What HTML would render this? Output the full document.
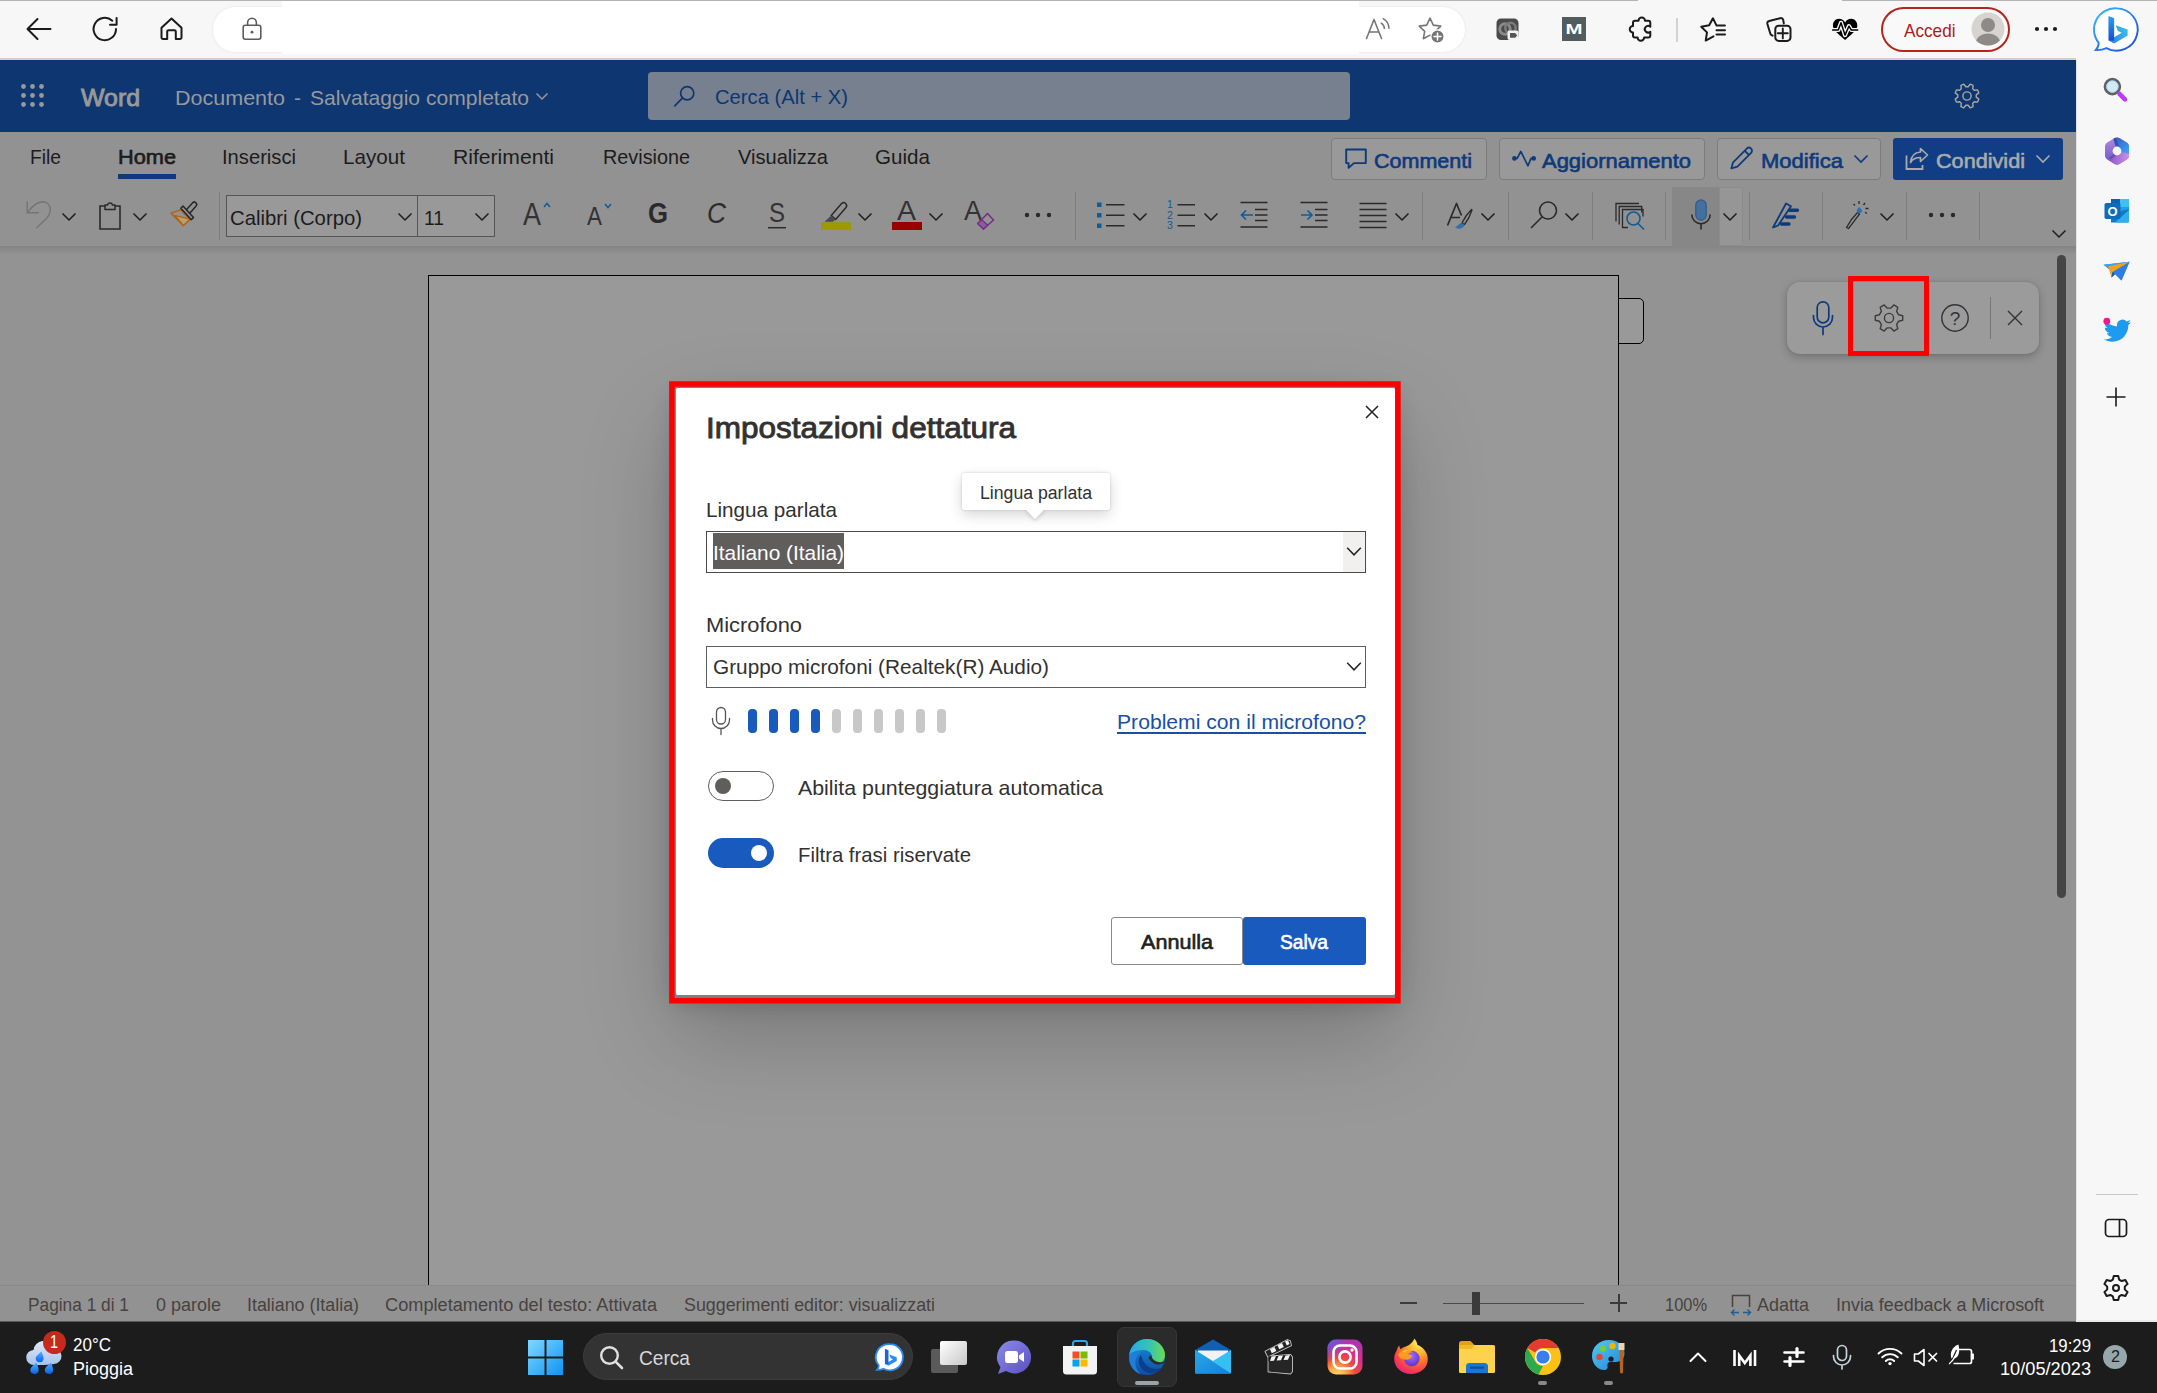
<!DOCTYPE html>
<html lang="it">
<head>
<meta charset="utf-8">
<title>Impostazioni dettatura - Word</title>
<style>
html,body{margin:0;padding:0}
body{width:2157px;height:1393px;overflow:hidden;position:relative;background:#939393;font-family:"Liberation Sans",sans-serif;color:#1c1c1c}
.a{position:absolute}
.t{position:absolute;white-space:nowrap;line-height:1;transform-origin:0 50%}
svg{position:absolute;overflow:visible}
.s{fill:none;stroke:#1b1b1b;stroke-width:1.5;stroke-linecap:round;stroke-linejoin:round}
.vd{position:absolute;width:1px;background:#7d7d7d;top:192px;height:48px}
</style>
</head>
<body>
<!-- ===== browser toolbar ===== -->
<div class="a" style="left:0;top:0;width:2157px;height:58px;background:#f7f7f7"></div>
<div class="a" style="left:0;top:0;width:1638px;height:1px;background:#b4b4b4"></div>
<div class="a" style="left:1842px;top:0;width:315px;height:1px;background:#b4b4b4"></div>
<div class="a" style="left:0;top:58px;width:2076px;height:2px;background:#cfcfcf"></div>
<div class="a" style="left:213px;top:7px;width:1252px;height:45px;border-radius:23px;background:#fff;box-shadow:0 0 3px rgba(0,0,0,.08)"></div>
<div class="a" style="left:282px;top:1px;width:1077px;height:53px;background:#fff"></div>
<!-- back -->
<svg style="left:25px;top:15px" width="28" height="28" viewBox="0 0 28 28"><path class="s" style="stroke-width:2" d="M25.5 14H3M12.5 4L2.5 14l10 10"/></svg>
<!-- refresh -->
<svg style="left:91px;top:15px" width="28" height="28" viewBox="0 0 28 28"><path class="s" style="stroke-width:2" d="M25 13.5A11.2 11.2 0 1 1 21.3 5.2M25.6 2.6v6.6h-6.6" transform="translate(0,.5)"/></svg>
<!-- home -->
<svg style="left:158px;top:15px" width="28" height="28" viewBox="0 0 28 28"><path class="s" style="stroke-width:2" d="M3.5 12.8L13.5 3.6l10 9.2V22.6a1.5 1.5 0 0 1-1.5 1.5h-4.2V16.6a1.4 1.4 0 0 0-1.4-1.4h-5.8a1.4 1.4 0 0 0-1.4 1.4v7.5H5a1.5 1.5 0 0 1-1.5-1.5z"/></svg>
<!-- lock -->
<svg style="left:241px;top:16px" width="22" height="26" viewBox="0 0 22 26"><rect x="2.2" y="9.2" width="17.6" height="14" rx="2.2" fill="none" stroke="#5c5c5c" stroke-width="1.6"/><path d="M6.6 9V6.6a4.4 4.4 0 0 1 8.8 0V9" fill="none" stroke="#5c5c5c" stroke-width="1.6"/><circle cx="11" cy="16.2" r="1.4" fill="#5c5c5c"/></svg>
<!-- read aloud -->
<svg style="left:1365px;top:16px" width="28" height="26" viewBox="0 0 28 26"><path d="M1.5 22.5L9 3.5l7.5 19M4.2 16h9.6" fill="none" stroke="#767676" stroke-width="1.6" stroke-linecap="round" stroke-linejoin="round"/><path d="M16.2 7.2a6.5 6.5 0 0 1 3.2 5.2M18.2 2.6a11.5 11.5 0 0 1 5.8 9.6" fill="none" stroke="#767676" stroke-width="1.5" stroke-linecap="round"/></svg>
<!-- add favourite -->
<svg style="left:1417px;top:15px" width="30" height="30" viewBox="0 0 30 30"><path d="M13 3.2l3.3 6.9 7.5 1-5.5 5.2 1.4 7.4-6.7-3.6-6.7 3.6 1.4-7.4L2.2 11.1l7.5-1z" fill="none" stroke="#767676" stroke-width="1.6" stroke-linejoin="round"/><circle cx="20.5" cy="21.5" r="6.6" fill="#767676" stroke="#fff" stroke-width="1.2"/><path d="M20.5 18v7M17 21.5h7" stroke="#fff" stroke-width="1.5" stroke-linecap="round"/></svg>
<!-- ext 1 -->
<svg style="left:1496px;top:18px" width="24" height="24" viewBox="0 0 24 24"><rect x="0.5" y="0.5" width="22" height="21.5" rx="4.5" fill="#4a4a4a"/><circle cx="9" cy="11" r="5.2" fill="none" stroke="#8a8a8a" stroke-width="3"/><circle cx="14.5" cy="10" r="5.2" fill="none" stroke="#7a7a7a" stroke-width="2.6"/><rect x="11.5" y="12.5" width="11" height="9.5" rx="2" fill="#f2f2f2"/><path d="M14 15h5.2l2 2.4-2 2.4H14z" fill="#555"/></svg>
<!-- ext M -->
<div class="a" style="left:1562px;top:17px;width:24px;height:24px;background:#525b5d"></div>
<svg style="left:1562px;top:17px" width="24" height="24" viewBox="0 0 24 24"><text x="12" y="17.4" text-anchor="middle" font-family="Liberation Sans, sans-serif" font-size="14.5" font-weight="bold" fill="#fff" textLength="17" lengthAdjust="spacingAndGlyphs">M</text></svg>
<!-- puzzle -->
<svg style="left:1627px;top:16px" width="28" height="28" viewBox="0 0 28 28"><path class="s" style="stroke-width:2" d="M8 4.8H11.5a3.25 3.25 0 0 1 6.5 0H21.3a2 2 0 0 1 2 2V10.7a3.3 3.3 0 1 0 0 5V19.5a2 2 0 0 1-2 2H17.1a3.25 3.25 0 0 1-6.5 0H8a2 2 0 0 1-2-2V16.4a3.25 3.25 0 0 1 0-6.5V6.8a2 2 0 0 1 2-2z"/></svg>
<div class="a" style="left:1676px;top:18px;width:2px;height:24px;background:#d2d2d2"></div>
<!-- favourites -->
<svg style="left:1698px;top:16px" width="30" height="28" viewBox="0 0 30 28"><path class="s" style="stroke-width:2" d="M26.9 9.6H18.6L14.9 2.3 11.2 9.3 3.2 10.7 9 16.4 7.7 24.6 15.5 20.4"/><path class="s" style="stroke-width:2" d="M18.5 14.3h8.5M18.5 18.6h8.5"/></svg>
<!-- collections -->
<svg style="left:1765px;top:16px" width="30" height="30" viewBox="0 0 30 30"><path class="s" style="stroke-width:2" d="M7.6 19.6l-.8-.3a2.6 2.6 0 0 1-1.6-2.1L2.4 8a2.5 2.5 0 0 1 1.8-3l11-2.8a2.5 2.5 0 0 1 3 1.7l.6 3.5"/><rect class="s" style="stroke-width:2" x="10.3" y="9.7" width="15.2" height="15.2" rx="3.4"/><path class="s" style="stroke-width:1.9" d="M17.8 12.4v10M12.8 17.3h10"/></svg>
<!-- heart pulse -->
<svg style="left:1832px;top:17px" width="27" height="25" viewBox="0 0 27 25"><path d="M13.1 5.4C11.8 3 9.6 1.7 7 1.7 3.6 1.7.9 4.6.9 8.3c0 4.2 3.1 7.2 12.2 14.7 9.1-7.5 12.2-10.5 12.2-14.7 0-3.7-2.7-6.6-6.1-6.6-2.6 0-4.8 1.3-6.1 3.7z" fill="#000"/><path d="M-.5 13H6.3L9 5.8l4 12.3 3.9-8.9 2.4 3.8h8" fill="none" stroke="#f7f7f7" stroke-width="4.2" stroke-linejoin="round"/><path d="M.6 13H6.3L9 5.8l4 12.3 3.9-8.9 2.4 3.8h6.4" fill="none" stroke="#000" stroke-width="1.5" stroke-linejoin="round" stroke-linecap="round"/></svg>
<!-- Accedi -->
<div class="a" style="left:1881px;top:7px;width:125px;height:41px;border:2px solid #b3261e;border-radius:23px;background:#f9f9f9"></div>
<span class="t" style="left:1904px;top:21px;font-size:19px;color:#b01a1a;transform:scaleX(0.9030)">Accedi</span>
<svg style="left:1971px;top:12px" width="34" height="34" viewBox="0 0 34 34"><defs><clipPath id="av"><circle cx="17" cy="17" r="16.5"/></clipPath></defs><circle cx="17" cy="17" r="16.5" fill="#d6d4d1"/><g clip-path="url(#av)" fill="#8d8a87"><circle cx="17" cy="13" r="7"/><ellipse cx="17" cy="32" rx="12.5" ry="10.5"/></g></svg>
<!-- ... -->
<svg style="left:2034px;top:26px" width="24" height="6" viewBox="0 0 24 6"><circle cx="3" cy="3" r="2.1" fill="#1b1b1b"/><circle cx="12" cy="3" r="2.1" fill="#1b1b1b"/><circle cx="21" cy="3" r="2.1" fill="#1b1b1b"/></svg>
<!-- ===== Word header ===== -->
<div class="a" style="left:0;top:60px;width:2076px;height:72px;background:#0e3671"></div>
<svg style="left:20px;top:83px" width="26" height="26" viewBox="0 0 26 26" fill="#999"><circle cx="3.5" cy="3.5" r="2.4"/><circle cx="12.5" cy="3.5" r="2.4"/><circle cx="21.5" cy="3.5" r="2.4"/><circle cx="3.5" cy="12.5" r="2.4"/><circle cx="12.5" cy="12.5" r="2.4"/><circle cx="21.5" cy="12.5" r="2.4"/><circle cx="3.5" cy="21.5" r="2.4"/><circle cx="12.5" cy="21.5" r="2.4"/><circle cx="21.5" cy="21.5" r="2.4"/></svg>
<span class="t" style="left:81px;top:86px;font-size:24px;color:#999;-webkit-text-stroke:.9px #999;transform:scaleX(1.0368)">Word</span>
<span class="t" style="left:175px;top:87px;font-size:21px;color:#999;transform:scaleX(1.0243)">Documento</span>
<span class="t" style="left:294px;top:87px;font-size:21px;color:#999;transform:scaleX(1.0000)">-</span>
<span class="t" style="left:310px;top:87px;font-size:21px;color:#999;transform:scaleX(1.0031)">Salvataggio completato</span>
<svg style="left:535px;top:92px" width="14" height="9" viewBox="0 0 14 9"><path d="M1.5 1.5L7 7l5.5-5.5" fill="none" stroke="#999" stroke-width="1.5"/></svg>
<div class="a" style="left:648px;top:72px;width:702px;height:48px;border-radius:4px;background:#77808e"></div>
<svg style="left:673px;top:84px" width="24" height="24" viewBox="0 0 24 24"><circle cx="14.2" cy="9.2" r="6.6" fill="none" stroke="#0e3671" stroke-width="1.7"/><path d="M9.6 13.8L1.8 21.8" stroke="#0e3671" stroke-width="1.7" stroke-linecap="round"/></svg>
<span class="t" style="left:715px;top:86px;font-size:21px;color:#0e3671;transform:scaleX(0.9617)">Cerca (Alt + X)</span>
<svg style="left:1953px;top:82px" width="28" height="28" viewBox="0 0 28 28"><path d="M23.23 15.13 L25.78 17.16 L24.57 20.10 L21.33 19.73 L19.73 21.33 L20.10 24.57 L17.16 25.78 L15.13 23.23 L12.87 23.23 L10.84 25.78 L7.90 24.57 L8.27 21.33 L6.67 19.73 L3.43 20.10 L2.22 17.16 L4.77 15.13 L4.77 12.87 L2.22 10.84 L3.43 7.90 L6.67 8.27 L8.27 6.67 L7.90 3.43 L10.84 2.22 L12.87 4.77 L15.13 4.77 L17.16 2.22 L20.10 3.43 L19.73 6.67 L21.33 8.27 L24.57 7.90 L25.78 10.84 L23.23 12.87z" fill="none" stroke="#aaa6a0" stroke-width="1.4" stroke-linejoin="round"/><circle cx="14" cy="14" r="4.1" fill="none" stroke="#aaa6a0" stroke-width="1.4"/></svg>
<!-- ===== tabs + ribbon ===== -->
<div class="a" style="left:0;top:132px;width:2076px;height:114px;background:#929292"></div>
<div class="a" style="left:0;top:246px;width:2076px;height:9px;background:linear-gradient(#858585,#939393)"></div>
<span class="t" style="left:30px;top:146px;font-size:21px;transform:scaleX(0.9160)">File</span>
<span class="t" style="left:118px;top:146px;font-size:21px;-webkit-text-stroke:.65px #1c1c1c;transform:scaleX(1.0351)">Home</span>
<div class="a" style="left:118px;top:174px;width:58px;height:5px;background:#0e3a7c"></div>
<span class="t" style="left:222px;top:146px;font-size:21px;transform:scaleX(0.9606)">Inserisci</span>
<span class="t" style="left:343px;top:146px;font-size:21px;transform:scaleX(0.9832)">Layout</span>
<span class="t" style="left:453px;top:146px;font-size:21px;transform:scaleX(1.0064)">Riferimenti</span>
<span class="t" style="left:603px;top:146px;font-size:21px;transform:scaleX(0.9434)">Revisione</span>
<span class="t" style="left:738px;top:146px;font-size:21px;transform:scaleX(0.9557)">Visualizza</span>
<span class="t" style="left:875px;top:146px;font-size:21px;transform:scaleX(0.9813)">Guida</span>
<!-- right buttons -->
<div class="a" style="left:1331px;top:138px;width:156px;height:42px;border:1px solid #7c7c7c;border-radius:4px;background:#999;box-sizing:border-box"></div>
<svg style="left:1344px;top:147px" width="24" height="24" viewBox="0 0 24 24"><path d="M2.2 2.5h19.6v13.6H10l-5.4 4.8v-4.8H2.2z" fill="none" stroke="#0e3a7c" stroke-width="1.9" stroke-linejoin="round"/></svg>
<span class="t" style="left:1374px;top:150px;font-size:21px;color:#0e3a7c;-webkit-text-stroke:.65px #0e3a7c;transform:scaleX(1.0240)">Commenti</span>
<div class="a" style="left:1499px;top:138px;width:206px;height:42px;border:1px solid #7c7c7c;border-radius:4px;background:#999;box-sizing:border-box"></div>
<svg style="left:1510px;top:148px" width="28" height="20" viewBox="0 0 28 20"><path d="M4.4 10.4h2.8L10.8 3.4 18 17.8l3-7.400h2.7" fill="none" stroke="#0e3a7c" stroke-width="1.7" stroke-linejoin="round" stroke-linecap="round"/><circle cx="4.4" cy="10.4" r="2.3" fill="#0e3a7c"/><circle cx="23.7" cy="10.4" r="2.3" fill="#0e3a7c"/></svg>
<span class="t" style="left:1542px;top:150px;font-size:21px;color:#0e3a7c;-webkit-text-stroke:.65px #0e3a7c;transform:scaleX(1.0461)">Aggiornamento</span>
<div class="a" style="left:1717px;top:138px;width:164px;height:42px;border:1px solid #7c7c7c;border-radius:4px;background:#999;box-sizing:border-box"></div>
<svg style="left:1729px;top:146px" width="26" height="26" viewBox="0 0 26 26"><path d="M17.8 2.6a3 3 0 0 1 4.3 4.3L8.4 20.6l-6 1.7 1.7-6zM15.8 4.8l4.2 4.2" fill="none" stroke="#0e3a7c" stroke-width="1.8" stroke-linejoin="round"/></svg>
<span class="t" style="left:1761px;top:150px;font-size:21px;color:#0e3a7c;-webkit-text-stroke:.65px #0e3a7c;transform:scaleX(1.0486)">Modifica</span>
<svg style="left:1853px;top:154px" width="16" height="10" viewBox="0 0 16 10"><path d="M1.5 1.5L8 8l6.5-6.5" fill="none" stroke="#0e3a7c" stroke-width="1.6"/></svg>
<div class="a" style="left:1893px;top:138px;width:170px;height:42px;border-radius:3px;background:#103d83"></div>
<svg style="left:1904px;top:146px" width="26" height="26" viewBox="0 0 26 26"><path d="M2.5 9.5v13.5h16v-4" fill="none" stroke="#aaa" stroke-width="1.8"/><path d="M16.5 2.5l7 6.5-7 6.5v-4c-5 0-8 1.5-10 5 .5-6 4-10 10-10.5z" fill="none" stroke="#aaa" stroke-width="1.7" stroke-linejoin="round"/></svg>
<span class="t" style="left:1936px;top:150px;font-size:21px;color:#aaa;-webkit-text-stroke:.65px #aaa;transform:scaleX(1.0302)">Condividi</span>
<svg style="left:2035px;top:154px" width="16" height="10" viewBox="0 0 16 10"><path d="M1.5 1.5L8 8l6.5-6.5" fill="none" stroke="#aaa" stroke-width="1.6"/></svg>
<!-- ===== ribbon commands ===== -->
<!-- undo (disabled) -->
<svg style="left:25px;top:197px" width="28" height="34" viewBox="0 0 28 34"><path d="M2.2 4.6V15.8H13.9" fill="none" stroke="#747474" stroke-width="1.4"/><path d="M2.7 15.4C7 9.5 12 4.8 18.2 4.8c4.3 0 7.1 3.5 7.1 8.2 0 4-2.4 7-4.9 9.6L11.4 30.9" fill="none" stroke="#747474" stroke-width="1.4"/></svg>
<svg class="cv" style="left:61px;top:212px" width="16" height="10" viewBox="0 0 16 10"><path d="M1.5 1.5L8 8l6.5-6.5" fill="none" stroke="#1d1d1d" stroke-width="1.5"/></svg>
<!-- clipboard -->
<svg style="left:98px;top:201px" width="24" height="30" viewBox="0 0 24 30"><path d="M7 5H2v23h20V5h-5" fill="none" stroke="#2a2a2a" stroke-width="1.6"/><path d="M7 8.5V4h2.5a2.6 2.6 0 0 1 5 0H17v4.5z" fill="none" stroke="#2a2a2a" stroke-width="1.5" stroke-linejoin="round"/></svg>
<svg class="cv" style="left:132px;top:212px" width="16" height="10" viewBox="0 0 16 10"><path d="M1.5 1.5L8 8l6.5-6.5" fill="none" stroke="#1d1d1d" stroke-width="1.5"/></svg>
<!-- format painter -->
<svg style="left:169px;top:194px" width="30" height="34" viewBox="0 0 30 34"><path d="M2 19.2L11.6 15.8 21 25.2 14.3 31.5z" fill="none" stroke="#b5610f" stroke-width="1.4" stroke-linejoin="round"/><path d="M6 21.5L21 25.2 14.3 31.5z" fill="#b9a070" stroke="#b5610f" stroke-width="1.2" stroke-linejoin="round"/><path d="M11.8 14.2l2.2-2.2 10.5 11.5-2.2 2.2zM17.6 15.4L24 8.5a1.7 1.7 0 0 1 2.4 0l.9.9a1.7 1.7 0 0 1 0 2.4L21 18.900" fill="none" stroke="#262626" stroke-width="1.5" stroke-linejoin="round"/></svg>
<div class="vd" style="left:219px"></div>
<!-- font box -->
<div class="a" style="left:226px;top:195px;width:269px;height:42px;border:1px solid #555;background:#999;box-sizing:border-box"></div>
<div class="a" style="left:417px;top:195px;width:1px;height:42px;background:#555"></div>
<span class="t" style="left:230px;top:207px;font-size:21px;transform:scaleX(0.9668)">Calibri (Corpo)</span>
<svg class="cv" style="left:397px;top:212px" width="16" height="10" viewBox="0 0 16 10"><path d="M1.5 1.5L8 8l6.5-6.5" fill="none" stroke="#1d1d1d" stroke-width="1.5"/></svg>
<span class="t" style="left:424px;top:207px;font-size:21px;transform:scaleX(0.9169)">11</span>
<svg class="cv" style="left:474px;top:212px" width="16" height="10" viewBox="0 0 16 10"><path d="M1.5 1.5L8 8l6.5-6.5" fill="none" stroke="#1d1d1d" stroke-width="1.5"/></svg>
<!-- grow / shrink font -->
<span class="t" style="left:523px;top:199px;font-size:31px;color:#333;transform:scaleX(0.8701)">A</span>
<svg style="left:543px;top:202px" width="8" height="6" viewBox="0 0 8 6"><path d="M1 5l3-3.5L7 5" fill="none" stroke="#105c98" stroke-width="1.5"/></svg>
<span class="t" style="left:587px;top:204px;font-size:25px;color:#333;transform:scaleX(0.8989)">A</span>
<svg style="left:604px;top:203px" width="8" height="6" viewBox="0 0 8 6"><path d="M1 1l3 3.5L7 1" fill="none" stroke="#105c98" stroke-width="1.5"/></svg>
<span class="t" style="left:648px;top:199px;font-size:29px;font-weight:bold;color:#2a2a2a;transform:scaleX(0.8864)">G</span>
<span class="t" style="left:707px;top:199px;font-size:29px;font-style:italic;color:#2c2c2c;transform:scaleX(0.9068)">C</span>
<span class="t" style="left:769px;top:199px;font-size:28px;color:#333;transform:scaleX(0.8562)">S</span>
<svg style="left:768px;top:226px" width="18" height="4" viewBox="0 0 18 4"><path d="M0 1.700h18" stroke="#2c2c2c" stroke-width="1.500"/></svg>
<!-- highlighter -->
<svg style="left:820px;top:196px" width="32" height="36" viewBox="0 0 32 36"><path d="M11.2 19.5L21.8 7.3a3 3 0 0 1 4.4 3.9L15.6 23.4z" fill="none" stroke="#2a2a2a" stroke-width="1.5" stroke-linejoin="round"/><path d="M11.2 19.5l4.4 3.9-2.8 2.3H4.6z" fill="#4a4a4a"/><rect x="1" y="26.3" width="30" height="7.7" fill="#9d9a00"/></svg>
<svg class="cv" style="left:857px;top:212px" width="16" height="10" viewBox="0 0 16 10"><path d="M1.5 1.5L8 8l6.5-6.5" fill="none" stroke="#1d1d1d" stroke-width="1.5"/></svg>
<!-- font colour -->
<span class="t" style="left:897px;top:197px;font-size:28px;color:#333;transform:scaleX(1.0167)">A</span>
<div class="a" style="left:892px;top:222px;width:30px;height:8px;background:#990000"></div>
<svg class="cv" style="left:928px;top:212px" width="16" height="10" viewBox="0 0 16 10"><path d="M1.5 1.5L8 8l6.5-6.5" fill="none" stroke="#1d1d1d" stroke-width="1.5"/></svg>
<!-- clear formatting -->
<span class="t" style="left:964px;top:197px;font-size:28px;color:#333;transform:scaleX(0.9632)">A</span>
<svg style="left:976px;top:212px" width="20" height="20" viewBox="0 0 20 20"><path d="M11.500 1.500l6 6.400-10 9.100-5.800-5.400z" fill="none" stroke="#75288a" stroke-width="1.400" stroke-linejoin="round"/><path d="M5.800 7.600l5.900 5.600-4.200 3.800-5.800-5.400z" fill="#8c5c9c" stroke="#75288a" stroke-width="1.200" stroke-linejoin="round"/></svg>
<svg style="left:1024px;top:212px" width="28" height="6" viewBox="0 0 28 6"><circle cx="3" cy="3" r="2.2" fill="#2a2a2a"/><circle cx="14" cy="3" r="2.2" fill="#2a2a2a"/><circle cx="25" cy="3" r="2.2" fill="#2a2a2a"/></svg>
<div class="vd" style="left:1075px"></div>
<!-- bullets -->
<svg style="left:1096px;top:200px" width="30" height="30" viewBox="0 0 30 30"><g fill="#105c98"><rect x="1" y="2.5" width="4.5" height="4.5"/><rect x="1" y="13" width="4.5" height="4.5"/><rect x="1" y="23.5" width="4.5" height="4.5"/></g><path d="M10 4.8h18.5M10 15.2h18.5M10 25.8h18.5" stroke="#2a2a2a" stroke-width="1.6"/></svg>
<svg class="cv" style="left:1132px;top:212px" width="16" height="10" viewBox="0 0 16 10"><path d="M1.5 1.5L8 8l6.5-6.5" fill="none" stroke="#1d1d1d" stroke-width="1.5"/></svg>
<!-- numbering -->
<svg style="left:1166px;top:199px" width="32" height="32" viewBox="0 0 32 32"><g font-family="Liberation Sans, sans-serif" font-size="10.5" fill="#105c98"><text x="1" y="9">1</text><text x="1" y="19.5">2</text><text x="1" y="30">3</text></g><path d="M11.5 5.8H29M11.5 16.2H29M11.5 26.8H29" stroke="#2a2a2a" stroke-width="1.6"/></svg>
<svg class="cv" style="left:1203px;top:212px" width="16" height="10" viewBox="0 0 16 10"><path d="M1.5 1.5L8 8l6.5-6.5" fill="none" stroke="#1d1d1d" stroke-width="1.5"/></svg>
<!-- outdent -->
<svg style="left:1239px;top:200px" width="30" height="30" viewBox="0 0 30 30"><path d="M1.5 2.5h27M16 9.5h12.5M16 15h12.5M16 20.5h12.5M1.5 27h27" stroke="#2a2a2a" stroke-width="1.6"/><path d="M2.5 15h11.5M7 10.5L2.5 15 7 19.5" fill="none" stroke="#105c98" stroke-width="1.6"/></svg>
<!-- indent -->
<svg style="left:1299px;top:200px" width="30" height="30" viewBox="0 0 30 30"><path d="M1.5 2.5h27M16 9.5h12.5M16 15h12.5M16 20.5h12.5M1.5 27h27" stroke="#2a2a2a" stroke-width="1.6"/><path d="M2 15h11M8.5 10.5L13 15l-4.5 4.5" fill="none" stroke="#105c98" stroke-width="1.6"/></svg>
<!-- align -->
<svg style="left:1358px;top:201px" width="30" height="30" viewBox="0 0 30 30"><path d="M1.5 2.5h27M1.5 8.5h27M1.5 14.5h27M1.5 20.5h27M1.5 26.5h27" stroke="#2a2a2a" stroke-width="1.6"/></svg>
<svg class="cv" style="left:1394px;top:212px" width="16" height="10" viewBox="0 0 16 10"><path d="M1.5 1.5L8 8l6.5-6.5" fill="none" stroke="#1d1d1d" stroke-width="1.5"/></svg>
<div class="vd" style="left:1422px"></div>
<!-- styles -->
<svg style="left:1445px;top:200px" width="30" height="34" viewBox="0 0 30 34"><path d="M2.5 25.5L11.5 3.5l5 12M6 17.5h9" fill="none" stroke="#2a2a2a" stroke-width="1.7" stroke-linejoin="round"/><path d="M26.5 9.5c-3 3-7 8-9.5 13.5l2.5 1.5c3-4 6-9.5 7.5-14.5z" fill="none" stroke="#2a2a2a" stroke-width="1.3" stroke-linejoin="round"/><path d="M16.5 23c-3 .5-3.5 3-6.5 4.5 3 2 8 1.5 9.5-2.5z" fill="#2f6fae"/></svg>
<svg class="cv" style="left:1480px;top:212px" width="16" height="10" viewBox="0 0 16 10"><path d="M1.5 1.5L8 8l6.5-6.5" fill="none" stroke="#1d1d1d" stroke-width="1.5"/></svg>
<div class="vd" style="left:1508px"></div>
<!-- find -->
<svg style="left:1529px;top:200px" width="30" height="30" viewBox="0 0 30 30"><circle cx="19" cy="10.5" r="8.5" fill="none" stroke="#2a2a2a" stroke-width="1.6"/><path d="M13 17L2 28" stroke="#2a2a2a" stroke-width="1.6"/></svg>
<svg class="cv" style="left:1564px;top:212px" width="16" height="10" viewBox="0 0 16 10"><path d="M1.5 1.5L8 8l6.5-6.5" fill="none" stroke="#1d1d1d" stroke-width="1.5"/></svg>
<div class="vd" style="left:1592px"></div>
<!-- reuse / find files -->
<svg style="left:1614px;top:202px" width="32" height="30" viewBox="0 0 32 30"><path d="M2 19.5V1.5h23" fill="none" stroke="#2a2a2a" stroke-width="1.3"/><path d="M5.2 22.5V4.5h22.5v6" fill="none" stroke="#2a2a2a" stroke-width="1.3"/><path d="M14 25.5H8.5V7.5h20.5v7" fill="none" stroke="#2a2a2a" stroke-width="1.3"/><circle cx="19.5" cy="16.5" r="6.5" fill="none" stroke="#105c98" stroke-width="1.6"/><path d="M24 21.5l6 6" stroke="#105c98" stroke-width="1.6"/></svg>
<div class="vd" style="left:1665px"></div>
<!-- dictate -->
<div class="a" style="left:1672px;top:187px;width:47px;height:59px;background:#878787"></div>
<div class="a" style="left:1719px;top:187px;width:24px;height:59px;background:#969696;border:1px solid #8c8c8c;box-sizing:border-box"></div>
<svg style="left:1688px;top:198px" width="26" height="34" viewBox="0 0 26 34"><rect x="7.8" y="1.8" width="10.4" height="20.4" rx="5.2" fill="#44709e" stroke="#2d5a8e" stroke-width="1.2"/><path d="M3.8 16.5a9.2 9.2 0 0 0 18.4 0M13 25.7V31.500" fill="none" stroke="#2a2a2a" stroke-width="1.6"/></svg>
<svg class="cv" style="left:1722px;top:212px" width="16" height="10" viewBox="0 0 16 10"><path d="M1.5 1.5L8 8l6.5-6.5" fill="none" stroke="#1d1d1d" stroke-width="1.5"/></svg>
<div class="vd" style="left:1749px"></div>
<!-- editor -->
<svg style="left:1770px;top:199px" width="32" height="32" viewBox="0 0 32 32"><path d="M3 28.5L16 4.5l5 2.8L8 26.5zM3 28.5l5-2" fill="none" stroke="#0e3a7c" stroke-width="1.8" stroke-linejoin="round"/><path d="M19.5 11.300h8M16.5 18h8M11.5 25h7.5" stroke="#0e3a7c" stroke-width="3.4" stroke-linecap="round"/></svg>
<div class="vd" style="left:1822px"></div>
<!-- designer wand -->
<svg style="left:1845px;top:199px" width="28" height="32" viewBox="0 0 28 32"><path d="M1.5 28.5C5 22 9 17 12.5 13.5l2 1.5C11.5 19 8 24 3.5 29.5z" fill="none" stroke="#2a2a2a" stroke-width="1.3" stroke-linejoin="round"/><path d="M14 8c-2 2-3 4-1.5 6 2 1 4 0 4.5-2 .3-1.6-1.5-2.4-3-4z" fill="#2f6fae"/><path d="M14 2v3M20 4l-1.5 2M23.5 9.5h-3M22 14.5l-2-1.2M8.5 5l1.5 1.5" stroke="#2a2a2a" stroke-width="1.3"/></svg>
<svg class="cv" style="left:1879px;top:212px" width="16" height="10" viewBox="0 0 16 10"><path d="M1.5 1.5L8 8l6.5-6.5" fill="none" stroke="#1d1d1d" stroke-width="1.5"/></svg>
<div class="vd" style="left:1906px"></div>
<svg style="left:1928px;top:212px" width="28" height="6" viewBox="0 0 28 6"><circle cx="3" cy="3" r="2.2" fill="#2a2a2a"/><circle cx="14" cy="3" r="2.2" fill="#2a2a2a"/><circle cx="25" cy="3" r="2.2" fill="#2a2a2a"/></svg>
<div class="vd" style="left:1979px"></div>
<svg class="cv" style="left:2051px;top:229px" width="16" height="10" viewBox="0 0 16 10"><path d="M1.5 1.5L8 8l6.5-6.5" fill="none" stroke="#1d1d1d" stroke-width="1.5"/></svg>
<!-- ===== document canvas ===== -->
<div class="a" style="left:428px;top:275px;width:1191px;height:1011px;background:#999;border:1px solid #000;border-bottom:0;box-sizing:border-box"></div>
<div class="a" style="left:1618px;top:298px;width:26px;height:46px;border:1px solid #000;border-radius:0 5px 5px 0;background:#999;box-sizing:border-box"></div>
<!-- scrollbar -->
<div class="a" style="left:2057px;top:255px;width:9px;height:643px;border-radius:5px;background:#454545"></div>
<!-- dictation toolbar -->
<div class="a" style="left:1787px;top:282px;width:252px;height:72px;border-radius:13px;background:#9b9b9b;box-shadow:0 3px 10px rgba(0,0,0,.22),0 0 3px rgba(0,0,0,.1)"></div>
<svg style="left:1808px;top:300px" width="30" height="36" viewBox="0 0 30 36"><rect x="9.2" y="1.8" width="11.6" height="21" rx="5.8" fill="none" stroke="#0e3a7c" stroke-width="1.7"/><path d="M5.5 15.5v2a9.5 9.5 0 0 0 19 0v-2M15 27.2v7.3" fill="none" stroke="#0e3a7c" stroke-width="1.7" stroke-linecap="round"/></svg>
<svg style="left:1874px;top:303px" width="30" height="30" viewBox="0 0 30 30"><path d="M24.55 11.71 L28.71 12.71 L28.71 17.29 L24.55 18.29 L22.62 21.63 L23.84 25.73 L19.87 28.02 L16.93 24.91 L13.07 24.91 L10.13 28.02 L6.16 25.73 L7.38 21.63 L5.45 18.29 L1.29 17.29 L1.29 12.71 L5.45 11.71 L7.38 8.37 L6.16 4.27 L10.13 1.98 L13.07 5.09 L16.93 5.09 L19.87 1.98 L23.84 4.27 L22.62 8.37z" fill="none" stroke="#3c3c3c" stroke-width="1.4" stroke-linejoin="round"/><circle cx="15" cy="15" r="4.6" fill="none" stroke="#3c3c3c" stroke-width="1.4"/></svg>
<div class="a" style="left:1848px;top:276px;width:81px;height:80px;border:5px solid #f00;box-sizing:border-box"></div>
<svg style="left:1940px;top:303px" width="30" height="30" viewBox="0 0 30 30"><circle cx="15" cy="15" r="13.2" fill="none" stroke="#333" stroke-width="1.4"/><text x="15" y="21.6" text-anchor="middle" font-family="Liberation Sans, sans-serif" font-size="19" fill="#333">?</text></svg>
<div class="a" style="left:1990px;top:297px;width:1px;height:42px;background:#777"></div>
<svg style="left:2007px;top:310px" width="16" height="16" viewBox="0 0 16 16"><path d="M1 1l14 14M15 1L1 15" stroke="#333" stroke-width="1.4"/></svg>
<!-- ===== status bar ===== -->
<div class="a" style="left:0;top:1285px;width:2076px;height:36px;background:#929292;border-top:1px solid #8a8a8a;box-sizing:border-box"></div>
<span class="t" style="left:28px;top:1296px;font-size:18px;color:#48423f;transform:scaleX(0.9610)">Pagina 1 di 1</span>
<span class="t" style="left:156px;top:1296px;font-size:18px;color:#48423f;transform:scaleX(0.9990)">0 parole</span>
<span class="t" style="left:247px;top:1296px;font-size:18px;color:#48423f;transform:scaleX(0.9906)">Italiano (Italia)</span>
<span class="t" style="left:385px;top:1296px;font-size:18px;color:#48423f;transform:scaleX(1.0106)">Completamento del testo: Attivata</span>
<span class="t" style="left:684px;top:1296px;font-size:18px;color:#48423f;transform:scaleX(0.9916)">Suggerimenti editor: visualizzati</span>
<div class="a" style="left:1400px;top:1302px;width:17px;height:2px;background:#3a3a3a"></div>
<div class="a" style="left:1443px;top:1303px;width:141px;height:1px;background:#4a4a4a"></div>
<div class="a" style="left:1472px;top:1292px;width:8px;height:23px;background:#3a3a3a"></div>
<div class="a" style="left:1610px;top:1302px;width:17px;height:2px;background:#3a3a3a"></div>
<div class="a" style="left:1618px;top:1294px;width:2px;height:18px;background:#3a3a3a"></div>
<span class="t" style="left:1665px;top:1296px;font-size:18px;color:#48423f;transform:scaleX(0.9121)">100%</span>
<svg style="left:1730px;top:1293px" width="22" height="24" viewBox="0 0 22 24"><path d="M2.5 14V2.5h17V14" fill="none" stroke="#48423f" stroke-width="1.5"/><path d="M1.5 19.5h7.5M13 19.5h7.5M4.5 16.5l-3 3 3 3M17.5 16.5l3 3-3 3" fill="none" stroke="#1e5f9a" stroke-width="1.4"/></svg>
<span class="t" style="left:1757px;top:1296px;font-size:18px;color:#48423f;transform:scaleX(0.9991)">Adatta</span>
<span class="t" style="left:1836px;top:1296px;font-size:18px;color:#48423f;transform:scaleX(0.9947)">Invia feedback a Microsoft</span>
<!-- ===== Edge sidebar ===== -->
<div class="a" style="left:2076px;top:58px;width:81px;height:1263px;background:#f7f7f7"></div>
<div class="a" style="left:2076px;top:60px;width:1px;height:1261px;background:#e3e3e3"></div>
<div class="a" style="left:2096px;top:1194px;width:42px;height:1px;background:#c8c8c8"></div>
<!-- sidebar icons -->
<svg style="left:2091px;top:5px" width="50" height="50" viewBox="0 0 52 52"><defs><linearGradient id="bg1" x1="0" y1="0" x2="1" y2="1"><stop offset="0" stop-color="#35c6f4"/><stop offset=".5" stop-color="#2b7cf0"/><stop offset="1" stop-color="#1b4fd1"/></linearGradient><linearGradient id="bg2" x1="0" y1="0" x2="0" y2="1"><stop offset="0" stop-color="#2b9df4"/><stop offset="1" stop-color="#1b48d6"/></linearGradient><linearGradient id="bg3" x1="0" y1="1" x2="1" y2="0"><stop offset="0" stop-color="#2b7cf0"/><stop offset="1" stop-color="#3fd6e0"/></linearGradient></defs><path d="M26.5 3.5a22 22 0 1 1-10.5 41.3c-3.5 1.6-7 2.2-11 2 2-2 3-4.5 3-7.5A22 22 0 0 1 26.5 3.5z" fill="#fff" stroke="url(#bg1)" stroke-width="2"/><g transform="translate(9.4,7) scale(1.57)"><path d="M5.71 3l3.593 1.264v12.645l5.061-2.919-2.48-1.165-1.566-3.897 7.974 2.802v4.073l-8.984 5.183-3.595-2z" fill="url(#bg3)"/><path d="M5.71 3l3.593 1.264v14.9L5.71 18.99z" fill="url(#bg2)"/></g></svg>
<svg style="left:2100px;top:74px" width="32" height="32" viewBox="0 0 32 32"><circle cx="12.4" cy="12.6" r="7.4" fill="#d4e9f8" stroke="#606060" stroke-width="2.8"/><circle cx="12.4" cy="12.6" r="5.8" fill="none" stroke="#a9cfec" stroke-width="1"/><path d="M19.5 19.800l5.500 5.500" stroke="#c03bf0" stroke-width="4.6" stroke-linecap="round"/></svg>
<svg style="left:2104px;top:137px" width="26" height="28" viewBox="0 0 26 28"><defs><clipPath id="hx"><path d="M10.7 1.1c1.4-.8 3.2-.8 4.6 0l7.4 4.3c1.4.8 2.3 2.3 2.3 4v9.2c0 1.7-.9 3.2-2.3 4l-7.4 4.3c-1.4.8-3.2.8-4.6 0l-7.4-4.3c-1.4-.8-2.3-2.3-2.3-4V9.4c0-1.7.9-3.2 2.3-4z"/></clipPath><linearGradient id="m1" x1="0" y1="0" x2="1" y2="1"><stop offset="0" stop-color="#3a52c4"/><stop offset=".6" stop-color="#3a8ee8"/><stop offset="1" stop-color="#3cc4f0"/></linearGradient><linearGradient id="m2" x1="0" y1="0" x2="0" y2="1"><stop offset="0" stop-color="#b48ae0"/><stop offset="1" stop-color="#6656c6"/></linearGradient><linearGradient id="m3" x1="0" y1="0" x2="1" y2="0"><stop offset="0" stop-color="#8a50c0"/><stop offset="1" stop-color="#d8a0f4"/></linearGradient></defs><g clip-path="url(#hx)"><rect width="26" height="28" fill="url(#m2)"/><path d="M13 14L8.5 -1H30V18z" fill="url(#m1)"/><path d="M13 14l17 4v12H3l2-9z" fill="url(#m3)"/><path d="M13 14L8.5 -1 11 -1 16 11z" fill="#2c3f9e" opacity=".55"/><path d="M13 14l-8 7 1.5 1.5L15 17z" fill="#4a3a9a" opacity=".5"/></g><circle cx="13" cy="14" r="4.4" fill="#f7f7f7"/></svg>
<svg style="left:2104px;top:198px" width="26" height="26" viewBox="0 0 26 26"><rect x="7" y="1" width="18" height="23" rx="1.5" fill="#1a8ad6"/><path d="M7 1h9v8H7z" fill="#0a62b4"/><path d="M16 1h9v8h-9z" fill="#3fc0f0"/><path d="M16 9h9v7h-9z" fill="#1d9ee8"/><path d="M7 16l18-5v12a1.5 1.5 0 0 1-1.5 1.5H7z" fill="#1478c8"/><path d="M25 12L11 24.5h12.5A1.5 1.5 0 0 0 25 23z" fill="#2fb0ee"/><rect x=".5" y="5" width="16" height="16" rx="1.8" fill="#0f6cbd"/><text x="8.5" y="17.6" text-anchor="middle" font-family="Liberation Sans, sans-serif" font-size="13" font-weight="bold" fill="#fff">O</text></svg>
<svg style="left:2103px;top:261px" width="27" height="20" viewBox="0 0 27 20"><path d="M.5 3.800L26.500 .8 18.500 19.500 12 13z" fill="#2f8cf0"/><path d="M.5 3.800L26.500 .8 10 8.500z" fill="#35a4f4"/><path d="M5 5.500L26.500 .8 8.500 16.500z" fill="#f2a31c"/><path d="M26.500 .8L9.500 11l-1 5.500 3.500-3.500 6.500 6.500z" fill="#2b7de8"/><path d="M9.500 11L12 13l-3.500 3.500z" fill="#1a55b8"/></svg>
<svg style="left:2102px;top:316px" width="30" height="28" viewBox="0 0 30 28"><path d="M29 6.2c-1 .5-2.1.8-3.2.9 1.2-.7 2-1.8 2.5-3.1-1.1.6-2.3 1.1-3.6 1.4a5.6 5.6 0 0 0-9.6 5.1C10.4 10.3 6.3 8 3.6 4.6c-1.5 2.6-.7 5.8 1.7 7.5-.9 0-1.8-.3-2.5-.7 0 2.7 1.9 5 4.5 5.6-.8.2-1.7.3-2.5.1.7 2.3 2.8 3.8 5.2 3.9-2.3 1.8-5.3 2.7-8.3 2.3 2.5 1.6 5.5 2.5 8.6 2.5 10.3 0 16-8.6 16-16v-.7c1.1-.8 2-1.8 2.7-2.9z" fill="#1d9bf0"/><circle cx="4.8" cy="5.2" r="3.4" fill="#f4188b"/></svg>
<svg style="left:2105px;top:386px" width="22" height="22" viewBox="0 0 22 22"><path d="M11 1.5v19M1.5 11h19" stroke="#1b1b1b" stroke-width="1.6"/></svg>
<svg style="left:2104px;top:1218px" width="24" height="20" viewBox="0 0 24 20"><rect x="1.5" y="1.5" width="21" height="17" rx="3.5" fill="none" stroke="#1b1b1b" stroke-width="1.7"/><path d="M15.5 1.5v17" stroke="#1b1b1b" stroke-width="1.7"/></svg>
<svg style="left:2102px;top:1274px" width="28" height="28" viewBox="0 0 28 28"><path d="M22.79 15.39 L25.59 18.11 L23.35 21.99 L19.60 20.92 L17.19 22.31 L16.24 26.09 L11.76 26.09 L10.81 22.31 L8.40 20.92 L4.65 21.99 L2.41 18.11 L5.21 15.39 L5.21 12.61 L2.41 9.89 L4.65 6.01 L8.40 7.08 L10.81 5.69 L11.76 1.91 L16.24 1.91 L17.19 5.69 L19.60 7.08 L23.35 6.01 L25.59 9.89 L22.79 12.61z" fill="none" stroke="#1b1b1b" stroke-width="2" stroke-linejoin="round"/><circle cx="14" cy="14" r="3" fill="none" stroke="#1b1b1b" stroke-width="2"/></svg>
<!-- ===== dialog ===== -->
<div class="a" style="left:675px;top:388px;width:720px;height:608px;box-shadow:0 38px 86px rgba(0,0,0,.22),0 7px 22px rgba(0,0,0,.18)"></div>
<svg style="left:660px;top:375px" width="750" height="640" viewBox="660 375 750 640"><rect x="674" y="386" width="722" height="613" fill="#7d8181"/><rect x="675.9" y="387.9" width="719.2" height="607.2" rx="2" fill="#fff"/><path fill="#ff0000" fill-rule="evenodd" d="M669.1 381.3H1400.7V1003.5H669.1zM674.6 386.8V998.1H1395.1V386.8z"/></svg>
<svg style="left:1365px;top:405px" width="14" height="14" viewBox="0 0 14 14"><path d="M1 1l12 12M13 1L1 13" stroke="#222" stroke-width="1.5"/></svg>
<span class="t" style="left:706px;top:413px;font-size:30px;color:#323130;-webkit-text-stroke:.9px #323130;transform:scaleX(1.0502)">Impostazioni dettatura</span>
<span class="t" style="left:706px;top:499px;font-size:21px;color:#323130;transform:scaleX(0.9842)">Lingua parlata</span>
<!-- combo 1 -->
<div class="a" style="left:706px;top:531px;width:660px;height:42px;border:1px solid #4a4a4a;background:#fff;box-sizing:border-box"></div>
<div class="a" style="left:1343px;top:532px;width:22px;height:40px;background:#f1f0ef"></div>
<div class="a" style="left:713px;top:533px;width:131px;height:36px;background:#605e5c"></div>
<span class="t" style="left:713px;top:542px;font-size:21px;color:#fff;transform:scaleX(0.9931)">Italiano (Italia)</span>
<svg style="left:1345px;top:546px" width="18" height="11" viewBox="0 0 18 11"><path d="M2.200 1.8L9 8.8l6.800-7" fill="none" stroke="#222" stroke-width="1.5"/></svg>
<!-- tooltip -->
<div class="a" style="left:962px;top:473px;width:148px;height:37px;background:#fff;border-radius:3px;box-shadow:0 5px 14px rgba(0,0,0,.16),0 0 3px rgba(0,0,0,.16)"></div>
<div class="a" style="left:1028px;top:502px;width:14px;height:14px;background:#fff;transform:rotate(45deg);box-shadow:2px 2px 4px rgba(0,0,0,.12)"></div>
<div class="a" style="left:1018px;top:496px;width:34px;height:14px;background:#fff"></div>
<span class="t" style="left:980px;top:484px;font-size:18px;color:#323130;transform:scaleX(0.9816)">Lingua parlata</span>
<!-- combo 2 -->
<span class="t" style="left:706px;top:614px;font-size:21px;color:#323130;transform:scaleX(1.0412)">Microfono</span>
<div class="a" style="left:706px;top:646px;width:660px;height:42px;border:1px solid #605e5c;background:#fff;box-sizing:border-box"></div>
<span class="t" style="left:713px;top:656px;font-size:21px;color:#323130;transform:scaleX(0.9893)">Gruppo microfoni (Realtek(R) Audio)</span>
<svg style="left:1345px;top:661px" width="18" height="11" viewBox="0 0 18 11"><path d="M2.200 1.8L9 8.8l6.800-7" fill="none" stroke="#222" stroke-width="1.5"/></svg>
<!-- level meter -->
<svg style="left:710px;top:706px" width="22" height="30" viewBox="0 0 22 30"><rect x="6.5" y="1.5" width="9" height="16.5" rx="4.5" fill="none" stroke="#555" stroke-width="1.3"/><path d="M2.5 12.5v1.5a8.5 8.5 0 0 0 17 0v-1.5M11 22.5v6" fill="none" stroke="#555" stroke-width="1.3" stroke-linecap="round"/></svg>
<div class="a" style="left:748px;top:709px;width:9px;height:24px;border-radius:4px;background:#185abd"></div>
<div class="a" style="left:769px;top:709px;width:9px;height:24px;border-radius:4px;background:#185abd"></div>
<div class="a" style="left:790px;top:709px;width:9px;height:24px;border-radius:4px;background:#185abd"></div>
<div class="a" style="left:811px;top:709px;width:9px;height:24px;border-radius:4px;background:#185abd"></div>
<div class="a" style="left:832px;top:709px;width:9px;height:24px;border-radius:4px;background:#c8c8c8"></div>
<div class="a" style="left:853px;top:709px;width:9px;height:24px;border-radius:4px;background:#c8c8c8"></div>
<div class="a" style="left:874px;top:709px;width:9px;height:24px;border-radius:4px;background:#c8c8c8"></div>
<div class="a" style="left:895px;top:709px;width:9px;height:24px;border-radius:4px;background:#c8c8c8"></div>
<div class="a" style="left:916px;top:709px;width:9px;height:24px;border-radius:4px;background:#c8c8c8"></div>
<div class="a" style="left:937px;top:709px;width:9px;height:24px;border-radius:4px;background:#c8c8c8"></div>
<span class="t" style="left:1117px;top:711px;font-size:21px;color:#1650a8;text-decoration:underline;text-underline-offset:3px;transform:scaleX(1.0063)">Problemi con il microfono?</span>
<!-- toggles -->
<div class="a" style="left:708px;top:771px;width:66px;height:30px;border:1px solid #605e5c;border-radius:15px;background:#fff;box-sizing:border-box"></div>
<div class="a" style="left:715px;top:778px;width:16px;height:16px;border-radius:8px;background:#605e5c"></div>
<span class="t" style="left:798px;top:777px;font-size:21px;color:#323130;transform:scaleX(1.0166)">Abilita punteggiatura automatica</span>
<div class="a" style="left:708px;top:838px;width:66px;height:30px;border-radius:15px;background:#185abd"></div>
<div class="a" style="left:751px;top:845px;width:16px;height:16px;border-radius:8px;background:#fff"></div>
<span class="t" style="left:798px;top:844px;font-size:21px;color:#323130;transform:scaleX(0.9690)">Filtra frasi riservate</span>
<!-- buttons -->
<div class="a" style="left:1111px;top:917px;width:132px;height:48px;border:1px solid #8a8886;border-radius:3px;background:#fff;box-sizing:border-box"></div>
<span class="t" style="left:1141px;top:931px;font-size:21px;color:#201f1e;-webkit-text-stroke:.65px #201f1e;transform:scaleX(1.0277)">Annulla</span>
<div class="a" style="left:1243px;top:917px;width:123px;height:48px;border-radius:3px;background:#185abd"></div>
<span class="t" style="left:1280px;top:931px;font-size:21px;color:#fff;-webkit-text-stroke:.65px #fff;transform:scaleX(0.9137)">Salva</span>
<!-- ===== Windows taskbar ===== -->
<div class="a" style="left:0;top:1321px;width:2157px;height:72px;background:#1c1c1c"></div>
<div class="a" style="left:0;top:1321px;width:2076px;height:1px;background:#5a5a5a"></div>
<div class="a" style="left:2076px;top:1320px;width:81px;height:2px;background:#e8e8e8"></div>
<!-- weather -->
<svg style="left:24px;top:1330px" width="44" height="48" viewBox="0 0 44 48"><defs><linearGradient id="cl" x1="0" y1="0" x2="0" y2="1"><stop offset="0" stop-color="#dfe9f8"/><stop offset="1" stop-color="#a9c3ea"/></linearGradient><linearGradient id="dr" x1="0" y1="0" x2="0" y2="1"><stop offset="0" stop-color="#4fb0ff"/><stop offset="1" stop-color="#0b62e8"/></linearGradient></defs><g transform="translate(0,5)"><path d="M10 30a7.5 7.5 0 0 1-.5-15 10 10 0 0 1 19.5-2 8 8 0 0 1 1 16c-3 1-16.5 1-20 1z" fill="url(#cl)"/><path d="M17.5 16.5c1.5 4 2.5 6 2 8a4 4 0 0 1-7.800-1.5c.3-2 2.5-3.5 5.800-6.5z" fill="url(#dr)"/><path d="M12.5 27.5c1.5 4 2.5 6.5 2 8.5a4.200 4.200 0 0 1-8.200-1.5c.4-2.200 2.700-4 6.200-7z" fill="url(#dr)"/><path d="M27 27.5c1.5 4 2.5 6.5 2 8.5a4.200 4.200 0 0 1-8.200-1.5c.4-2.200 2.700-4 6.200-7z" fill="url(#dr)"/></g><circle cx="30.5" cy="12.5" r="11.5" fill="#c42b1c"/></svg>
<span class="t" style="left:50px;top:1333px;font-size:18px;color:#fff;transform:scaleX(0.7988)">1</span>
<span class="t" style="left:73px;top:1336px;font-size:18px;color:#fff;transform:scaleX(0.9448)">20°C</span>
<span class="t" style="left:73px;top:1360px;font-size:18px;color:#fff;transform:scaleX(0.9992)">Pioggia</span>
<!-- start -->
<svg style="left:528px;top:1340px" width="35" height="35" viewBox="0 0 35 35"><defs><linearGradient id="wn" x1="0" y1="0" x2="1" y2="1"><stop offset="0" stop-color="#7fd8ff"/><stop offset="1" stop-color="#0d94f5"/></linearGradient></defs><path d="M0 0h16.5v16.5H0zM18.5 0H35v16.5H18.5zM0 18.5h16.5V35H0zM18.5 18.5H35V35H18.5z" fill="url(#wn)"/></svg>
<!-- search pill -->
<div class="a" style="left:583px;top:1333px;width:330px;height:47px;border-radius:24px;background:#333;border:1px solid #3d3d3d;box-sizing:border-box"></div>
<svg style="left:598px;top:1344px" width="28" height="28" viewBox="0 0 28 28"><circle cx="11.5" cy="11.5" r="8.3" fill="none" stroke="#e0e0e0" stroke-width="2.4"/><path d="M17.8 17.8l6.2 6.2" stroke="#e0e0e0" stroke-width="2.6" stroke-linecap="round"/></svg>
<span class="t" style="left:639px;top:1347px;font-size:21px;color:#d8d8d8;transform:scaleX(0.9102)">Cerca</span>
<svg style="left:874px;top:1342px" width="31" height="31" viewBox="0 0 52 52"><path d="M26.5 3.5a22 22 0 1 1-10.5 41.3c-3.5 1.6-7 2.2-11 2 2-2 3-4.5 3-7.5A22 22 0 0 1 26.5 3.5z" fill="#fff" stroke="#2b8cf0" stroke-width="3"/><g transform="translate(9.4,7) scale(1.57)"><path d="M5.71 3l3.593 1.264v12.645l5.061-2.919-2.48-1.165-1.566-3.897 7.974 2.802v4.073l-8.984 5.183-3.595-2z" fill="#2b8cf0"/><path d="M5.71 3l3.593 1.264v14.9L5.71 18.99z" fill="#1f5fe0"/></g></svg>
<!-- task view -->
<div class="a" style="left:931px;top:1349px;width:27px;height:24px;border-radius:2px;background:#5a5a5a"></div>
<div class="a" style="left:940px;top:1341px;width:27px;height:24px;border-radius:2px;background:linear-gradient(135deg,#fff,#c8c8c8)"></div>
<!-- teams chat -->
<svg style="left:996px;top:1339px" width="36" height="36" viewBox="0 0 36 36"><defs><linearGradient id="tm" x1="0" y1="0" x2="1" y2="1"><stop offset="0" stop-color="#8b8be8"/><stop offset="1" stop-color="#5b4fc4"/></linearGradient></defs><path d="M18.5 1.5a16.5 16.5 0 1 1-8.5 30.6L2 35l2.5-7A16.5 16.5 0 0 1 18.5 1.5z" fill="url(#tm)"/><rect x="9" y="12" width="13" height="12" rx="2.5" fill="#fff"/><path d="M23 16.5l5-3.5v10l-5-3.5z" fill="#fff"/></svg>
<!-- store -->
<svg style="left:1062px;top:1338px" width="36" height="38" viewBox="0 0 36 38"><path d="M11 9V5.5a2.5 2.5 0 0 1 2.5-2.5h9a2.5 2.5 0 0 1 2.5 2.5V9" fill="none" stroke="#2aa4f4" stroke-width="2.2"/><path d="M1 8h34v25a3.5 3.5 0 0 1-3.5 3.5h-27A3.5 3.5 0 0 1 1 33z" fill="#f3f3f3"/><rect x="10.5" y="13.5" width="7" height="7" fill="#f25022"/><rect x="18.5" y="13.5" width="7" height="7" fill="#7fba00"/><rect x="10.5" y="21.5" width="7" height="7" fill="#00a4ef"/><rect x="18.5" y="21.5" width="7" height="7" fill="#ffb900"/></svg>
<!-- edge (active) -->
<div class="a" style="left:1117px;top:1327px;width:60px;height:60px;border-radius:7px;background:#2b2b2b;border:1px solid #363636;box-sizing:border-box"></div>
<div class="a" style="left:1135px;top:1381px;width:24px;height:4px;border-radius:2px;background:#98a4aa"></div>
<svg style="left:1128px;top:1338px" width="38" height="38" viewBox="0 0 38 38"><defs><linearGradient id="e1" x1="0" y1="0" x2="1" y2="0"><stop offset="0" stop-color="#2aa6e8"/><stop offset=".6" stop-color="#38c5b0"/><stop offset="1" stop-color="#6fdc4a"/></linearGradient><linearGradient id="e2" x1="0" y1="0" x2="0" y2="1"><stop offset="0" stop-color="#1a8ad8"/><stop offset="1" stop-color="#0c4fa8"/></linearGradient></defs><circle cx="19" cy="19" r="18" fill="url(#e2)"/><path d="M1.2 17C2.5 7.5 10 1 19 1c10 0 18 7.5 18 16 0 5-3.5 8.5-8.5 8.5-3.5 0-6-1.5-6-3 0-1 1.5-1.5 1.5-4 0-3.5-3.5-6.5-8.5-6.5C8.5 12 3 15 1.2 17z" fill="url(#e1)"/><path d="M13 17c-2.5 2.5-3 7-1 11 2.5 5 8 8 14 7 4-1 7-3 9-6-3 2-7 2.5-10.5 1.5C19 29 14.5 24 13 17z" fill="#0b3f8e"/><path d="M1.2 17c-1 9 4 17 12 19.5-5-4-7-10-5-16 1.5-4.5 5.5-8 10-8.5-7-.5-14 2-17 5z" fill="#1f7fd8"/><path d="M20.5 19.5c1.5 4.5 6 7.5 11 7 2.5-.3 4.5-1.5 5.5-3-3 1-6.5 1-9.5-.5-2.5-1.200-4-3.5-4.5-6z" fill="#2b2b2b"/></svg>
<!-- mail -->
<svg style="left:1194px;top:1339px" width="38" height="36" viewBox="0 0 38 36"><defs><linearGradient id="ml" x1="0" y1="0" x2="1" y2="1"><stop offset="0" stop-color="#28a8ea"/><stop offset="1" stop-color="#1480d8"/></linearGradient></defs><path d="M1 11L19 .5 37 11v6H1z" fill="#0f5fb4"/><path d="M4 11.5h30v14H4z" fill="#f2f2f2"/><path d="M1 11l18 11L37 11v22.5a1 1 0 0 1-1 1H2a1 1 0 0 1-1-1z" fill="#35c0f4"/><path d="M1 11l36 23.5H2a1 1 0 0 1-1-1z" fill="url(#ml)"/></svg>
<!-- clapper -->
<svg style="left:1262px;top:1337px" width="36" height="40" viewBox="0 0 36 40"><g stroke="#d8d8d8" stroke-width="1.8" stroke-linejoin="round" opacity=".9"><path d="M6.5 19.5l22-1.5 1.5 2v14.5l-1.5 2-22-2z"/><path d="M3.5 14.5L25.5 3l2.5 1 1 4.5L6 19.5z"/></g><path d="M6.5 19.5l22-1.5 1.5 2v14.5l-1.5 2-22-2z" fill="#262626"/><path d="M6.5 19.5l22-1.5v5l-22 1.2z" fill="#1a1a1a"/><path d="M3.5 14.5L25.5 3l2.5 1 1 4.5L6 19.5z" fill="#242424"/><path d="M8 12.2l4.5-2.3 1.8 4-4.5 2.3zM15.5 8.3l4.5-2.3 1.8 4-4.5 2.3zM23 4.4l3-1.2 1.5 3.8-2.7 1.4zM9.5 19.4l4.5-.3-2 4.6-4 .2zM16.5 18.9l4.5-.3-2 4.6-4.5.3zM23.5 18.4l4.5-.3-2 4.6-4.5.3z" fill="#f4f4f4"/></svg>
<!-- instagram -->
<svg style="left:1327px;top:1339px" width="36" height="36" viewBox="0 0 36 36"><defs><radialGradient id="ig" cx=".28" cy="1.05" r="1.25"><stop offset="0" stop-color="#ffdc80"/><stop offset=".2" stop-color="#fcaf45"/><stop offset=".42" stop-color="#f0483c"/><stop offset=".65" stop-color="#d62f8c"/><stop offset="1" stop-color="#a033c0"/></radialGradient><radialGradient id="ig2" cx="0" cy="0" r=".62"><stop offset="0" stop-color="#4e63e6"/><stop offset="1" stop-color="#4e63e6" stop-opacity="0"/></radialGradient></defs><rect x=".5" y=".5" width="35" height="35" rx="8.5" fill="url(#ig)"/><rect x=".5" y=".5" width="35" height="35" rx="8.5" fill="url(#ig2)"/><rect x="6.5" y="6.5" width="23" height="23" rx="6.5" fill="none" stroke="#fff" stroke-width="2.6"/><circle cx="18" cy="18" r="5.6" fill="none" stroke="#fff" stroke-width="2.6"/><circle cx="25" cy="11" r="1.7" fill="#fff"/></svg>
<!-- firefox -->
<svg style="left:1393px;top:1337px" width="36" height="38" viewBox="0 0 36 38"><defs><radialGradient id="ff" cx=".72" cy=".12" r="1.05"><stop offset="0" stop-color="#fff45e"/><stop offset=".3" stop-color="#ffb02a"/><stop offset=".55" stop-color="#ff6a2b"/><stop offset=".8" stop-color="#f5325c"/><stop offset="1" stop-color="#d9238a"/></radialGradient><radialGradient id="fp" cx=".45" cy=".35" r=".7"><stop offset="0" stop-color="#a56bff"/><stop offset="1" stop-color="#5a30c8"/></radialGradient></defs><path d="M21.5 1.5c1.8 2.2 2.6 4.3 2.8 6.3 5.7 2.3 10.5 7.5 10.5 14.5C34.8 30.8 27.5 37 18 37S1.2 30.5 1.2 21.8c0-3.2 1-6.2 2.6-8.4.3-1.8 1.2-3.6 2.4-4.8.2 1.4.6 2.6 1.4 3.6 1.4-1.3 3.3-2.3 5.4-2.8C15.5 8.8 19 6.5 21.5 1.5z" fill="url(#ff)"/><circle cx="18.8" cy="21.5" r="7.8" fill="url(#fp)"/><path d="M5 17.5c2.5-3.8 7-5.3 10.8-4.3 1.8.5 3.2 1.5 4 2.5-2-.4-3.8.2-4.8 1.6 1.6.1 3.2.6 4.4 1.8-1.4 2.8-4.5 4-7.5 3.5C8 22 5.5 20 5 17.5z" fill="#ff9a1f"/><path d="M9.5 14.5c1.8-1.2 4-1.7 6.3-1.3-1.7.3-3 1-4 2z" fill="#ffd23f"/></svg>
<!-- explorer -->
<svg style="left:1458px;top:1340px" width="38" height="34" viewBox="0 0 38 34"><path d="M1 3.5A2.5 2.5 0 0 1 3.5 1h9l4 4H1z" fill="#e0a315"/><path d="M1 5h34.5A1.5 1.5 0 0 1 37 6.5v25a1.5 1.5 0 0 1-1.5 1.5h-33A1.5 1.5 0 0 1 1 31.5z" fill="#ffd24d"/><path d="M1 5h15.5l-3 4H1z" fill="#f4b822"/><path d="M8 26.5A3.5 3.5 0 0 1 11.5 23h15a3.5 3.5 0 0 1 3.5 3.5V33H8z" fill="#1976d2"/><rect x="12" y="26.5" width="14" height="2.2" rx="1" fill="#0d4ea0"/></svg>
<!-- chrome -->
<svg style="left:1524px;top:1338px" width="38" height="38" viewBox="0 0 38 38"><circle cx="19" cy="19" r="18" fill="#fbc116"/><path d="M19 1a18 18 0 0 1 15.6 9H19a9 9 0 0 0-7.8 4.5L3.4 10A18 18 0 0 1 19 1z" fill="#e33b2e"/><path d="M3.4 10l7.8 13.5A9 9 0 0 0 19 28l-4.5 8.4A18 18 0 0 1 3.4 10z" fill="#2da94f"/><circle cx="19" cy="19" r="8.2" fill="#fff"/><circle cx="19" cy="19" r="6.6" fill="#3b7ded"/></svg>
<div class="a" style="left:1538px;top:1381px;width:9px;height:4px;border-radius:2px;background:#8a8a8a"></div>
<!-- paint -->
<svg style="left:1590px;top:1338px" width="38" height="38" viewBox="0 0 38 38"><defs><linearGradient id="pt" x1="0" y1="0" x2="1" y2="1"><stop offset="0" stop-color="#54c8f4"/><stop offset="1" stop-color="#1f86d8"/></linearGradient></defs><path d="M19 2C9 2 2 9 2 18c0 8 6 14 12 14 3 0 4-2 3.5-4-.5-2 .5-4 3-4h5c5 0 9-3.5 9-8.5C34.5 7.5 28 2 19 2z" fill="url(#pt)"/><circle cx="9.5" cy="19" r="3.2" fill="#e8452c"/><circle cx="13" cy="10.5" r="3.2" fill="#7ac943"/><circle cx="22.5" cy="8" r="3.2" fill="#f4b400"/><circle cx="21" cy="21" r="2.6" fill="#1c1c1c"/><path d="M29.5 12h4l-.5 22a1.5 1.5 0 0 1-3 0z" fill="#b5651d"/><path d="M28.5 5h6v7h-6z" fill="#e8d5b0"/></svg>
<div class="a" style="left:1604px;top:1381px;width:9px;height:4px;border-radius:2px;background:#8a8a8a"></div>
<!-- system tray -->
<svg style="left:1689px;top:1351px" width="18" height="12" viewBox="0 0 18 12"><path d="M1.5 10L9 2.5 16.5 10" fill="none" stroke="#fff" stroke-width="2" stroke-linecap="round" stroke-linejoin="round"/></svg>
<svg style="left:1733px;top:1349px" width="24" height="18" viewBox="0 0 24 18"><path d="M1.5 1v16" stroke="#fff" stroke-width="2.6"/><path d="M22 1v16" stroke="#fff" stroke-width="2.6"/><path d="M6.2 17V6.5L11.8 14l5.6-7.5V17" fill="none" stroke="#fff" stroke-width="2.6" stroke-linejoin="miter"/></svg>
<svg style="left:1783px;top:1347px" width="22" height="20" viewBox="0 0 22 20"><path d="M1.5 5.5h19M1.5 14.5h19" stroke="#fff" stroke-width="2.6" stroke-linecap="round"/><path d="M14 1.5v8M7 10.5v8" stroke="#fff" stroke-width="3.2" stroke-linecap="round"/></svg>
<svg style="left:1831px;top:1344px" width="22" height="26" viewBox="0 0 22 26"><rect x="6.5" y="1.5" width="9" height="15" rx="4.5" fill="none" stroke="#c4d4d8" stroke-width="1.7"/><path d="M2.5 11.5v1a8.5 8.5 0 0 0 17 0v-1M11 21v4" fill="none" stroke="#c4d4d8" stroke-width="1.7" stroke-linecap="round"/></svg>
<svg style="left:1877px;top:1346px" width="26" height="20" viewBox="0 0 26 20"><path d="M1.5 7.5a16.5 16.5 0 0 1 23 0M5.2 11.3a11.2 11.2 0 0 1 15.6 0M8.8 15a6 6 0 0 1 8.4 0" fill="none" stroke="#fff" stroke-width="1.9" stroke-linecap="round"/><circle cx="13" cy="17.6" r="1.7" fill="#fff"/></svg>
<svg style="left:1913px;top:1348px" width="26" height="19" viewBox="0 0 26 19"><path d="M1.5 6h3.8L11 1.5v16L5.3 13H1.5z" fill="none" stroke="#fff" stroke-width="1.6" stroke-linejoin="round"/><path d="M16 5.5l7.5 7.5M23.5 5.5L16 13" stroke="#fff" stroke-width="1.7" stroke-linecap="round"/></svg>
<svg style="left:1948px;top:1343px" width="28" height="24" viewBox="0 0 28 24"><path d="M10 6.5h11.5a2 2 0 0 1 2 2v10a2 2 0 0 1-2 2H5.5" fill="none" stroke="#fff" stroke-width="1.7" stroke-linejoin="round"/><path d="M23.5 11h1.8v5h-1.8z" fill="#fff" stroke="#fff" stroke-width="1.2" stroke-linejoin="round"/><path d="M10.5 1.5C4 4 1.5 10 3.5 15.5c5 1 9.5-3.5 7-14z" fill="#fff"/><path d="M8.5 7C7 11 5 15.5 1.5 20.5" fill="none" stroke="#1c1c1c" stroke-width="1.2"/><path d="M7 13.5C5.5 16.5 4 18.5 1.5 20.5" fill="none" stroke="#fff" stroke-width="1.4" stroke-linecap="round"/></svg>
<span class="t" style="left:2049px;top:1337px;font-size:18px;color:#fff;transform:scaleX(0.9324)">19:29</span>
<span class="t" style="left:2000px;top:1360px;font-size:18px;color:#fff;transform:scaleX(1.0101)">10/05/2023</span>
<div class="a" style="left:2103px;top:1345px;width:24px;height:24px;border-radius:12px;background:#97a8ad"></div>
<span class="t" style="left:2111px;top:1349px;font-size:16px;color:#1c1c1c;transform:scaleX(1.0105)">2</span>
</body>
</html>
